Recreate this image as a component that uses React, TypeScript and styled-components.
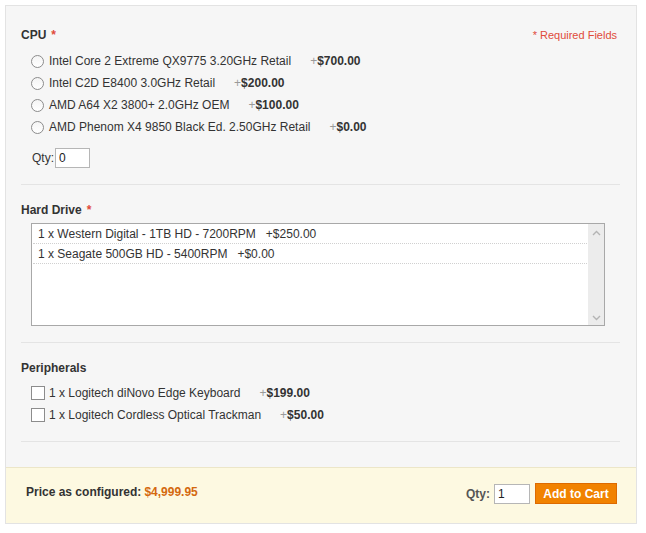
import React from 'react'
import styled, { createGlobalStyle } from 'styled-components'

const GlobalStyle = createGlobalStyle`
  body {
    margin: 0;
    background: #fff;
    font-family: 'Liberation Sans', Arial, sans-serif;
    font-size: 12px;
    color: #333;
  }
`

const Page = styled.div`
  padding: 5px;
`
const Panel = styled.div`
  width: 630px;
  border: 1px solid #e3e3e3;
  background: #f6f6f6;
`
const Options = styled.div`
  padding: 0 16px 25px 15px;
`
const Section = styled.div<{ first?: boolean; last?: boolean }>`
  padding: ${({ first }) => (first ? '20px' : '16px')} 0 ${({ last }) => (last ? '15px' : '16px')};
  border-bottom: 1px solid #e4e4e4;
`
const HeaderRow = styled.div`
  display: flex;
  justify-content: space-between;
  align-items: center;
  height: 18px;
`
const Title = styled.div`
  font-weight: bold;
  line-height: 18px;
  color: #333;
`
const Star = styled.span`
  color: #e04a3a;
  margin-left: 5px;
`
const Required = styled.div`
  font-size: 11px;
  color: #e04a3a;
  margin-right: 3px;
`
const OptionList = styled.div<{ gap: number }>`
  margin-top: ${({ gap }) => gap}px;
`
const OptionRow = styled.label`
  display: flex;
  align-items: center;
  height: 22px;
  padding-left: 10px;
  white-space: nowrap;
`
const Radio = styled.span`
  width: 11px;
  height: 11px;
  border-radius: 50%;
  border: 1px solid #8c8c8c;
  background: linear-gradient(#f4f4f4, #fff);
  margin-right: 5px;
  flex-shrink: 0;
`
const Checkbox = styled.span`
  width: 12px;
  height: 12px;
  border: 1px solid #8c8c8c;
  background: #fff;
  margin-right: 4px;
  flex-shrink: 0;
`
const Price = styled.span`
  margin-left: 19px;
  font-weight: bold;
  color: #333;
`
const Plus = styled.span`
  font-weight: normal;
  color: #9a9a9a;
`
const QtyRow = styled.div`
  display: flex;
  align-items: center;
  margin-top: 10px;
  padding-left: 11px;
`
const QtyLabel = styled.span<{ bold?: boolean }>`
  margin-right: ${({ bold }) => (bold ? '4px' : '1px')};
  font-weight: ${({ bold }) => (bold ? 'bold' : 'normal')};
  color: ${({ bold }) => (bold ? '#555' : '#333')};
`
const QtyInput = styled.input<{ w: number }>`
  box-sizing: border-box;
  width: ${({ w }) => w}px;
  height: 20px;
  border: 1px solid #b6b6b6;
  background: #fff;
  padding: 0 3px;
  font-family: inherit;
  font-size: 12px;
  color: #222;
  outline: none;
`
const ListBox = styled.div`
  display: flex;
  height: 101px;
  margin: 4px 15px 0 10px;
  border: 1px solid #a8a8a8;
  background: #fff;
`
const ListItems = styled.div`
  flex: 1;
  padding: 0 1px;
`
const ListItem = styled.div`
  height: 18px;
  padding-top: 1px;
  line-height: 19px;
  padding-left: 5px;
  border-bottom: 1px dotted #d0d0d0;
  white-space: pre;
  color: #333;
`
const ScrollBar = styled.div`
  width: 16px;
  background: #ececec;
  display: flex;
  flex-direction: column;
  justify-content: space-between;
  align-items: center;
  padding: 6px 0 4px;
`
const Footer = styled.div`
  display: flex;
  align-items: flex-start;
  justify-content: space-between;
  height: 56px;
  box-sizing: border-box;
  padding: 15px 19px 0 20px;
  border-top: 1px solid #ece6c8;
  background: #fdf9e1;
`
const PriceLabel = styled.div`
  font-weight: bold;
  line-height: 18px;
  color: #333;
`
const PriceValue = styled.span`
  color: #d4690f;
  margin-left: 3px;
`
const CartBox = styled.div`
  display: flex;
  align-items: center;
`
const CartButton = styled.button`
  height: 21px;
  width: 82px;
  margin-left: 5px;
  border: 1px solid #dd6a00;
  background: #f18200;
  color: #fff;
  font-family: inherit;
  font-size: 12px;
  font-weight: bold;
  padding: 0;
`

const Chevron = ({ up }: { up?: boolean }) => (
  <svg width="9" height="6" viewBox="0 0 9 6">
    <path d={up ? 'M1 5 L4.5 1.5 L8 5' : 'M1 1 L4.5 4.5 L8 1'} fill="none" stroke="#b4b4b4" strokeWidth="1.4" />
  </svg>
)

const cpus = [
  { label: 'Intel Core 2 Extreme QX9775 3.20GHz Retail', price: '$700.00' },
  { label: 'Intel C2D E8400 3.0GHz Retail', price: '$200.00' },
  { label: 'AMD A64 X2 3800+ 2.0GHz OEM', price: '$100.00' },
  { label: 'AMD Phenom X4 9850 Black Ed. 2.50GHz Retail', price: '$0.00' },
]

const drives = ['1 x Western Digital - 1TB HD - 7200RPM   +$250.00', '1 x Seagate 500GB HD - 5400RPM   +$0.00']

const peripherals = [
  { label: '1 x Logitech diNovo Edge Keyboard', price: '$199.00' },
  { label: '1 x Logitech Cordless Optical Trackman', price: '$50.00' },
]

export default function App() {
  return (
    <>
      <GlobalStyle />
      <Page>
        <Panel>
          <Options>
            <Section first>
              <HeaderRow>
                <Title>
                  CPU<Star>*</Star>
                </Title>
                <Required>* Required Fields</Required>
              </HeaderRow>
              <OptionList gap={6}>
                {cpus.map(cpu => (
                  <OptionRow key={cpu.label}>
                    <Radio />
                    {cpu.label}
                    <Price>
                      <Plus>+</Plus>
                      {cpu.price}
                    </Price>
                  </OptionRow>
                ))}
              </OptionList>
              <QtyRow>
                <QtyLabel>Qty:</QtyLabel>
                <QtyInput w={35} defaultValue="0" />
              </QtyRow>
            </Section>

            <Section>
              <Title>
                Hard Drive<Star>*</Star>
              </Title>
              <ListBox>
                <ListItems>
                  {drives.map(d => (
                    <ListItem key={d}>{d}</ListItem>
                  ))}
                </ListItems>
                <ScrollBar>
                  <Chevron up />
                  <Chevron />
                </ScrollBar>
              </ListBox>
            </Section>

            <Section last>
              <Title>Peripherals</Title>
              <OptionList gap={5}>
                {peripherals.map(p => (
                  <OptionRow key={p.label}>
                    <Checkbox />
                    {p.label}
                    <Price>
                      <Plus>+</Plus>
                      {p.price}
                    </Price>
                  </OptionRow>
                ))}
              </OptionList>
            </Section>
          </Options>

          <Footer>
            <PriceLabel>
              Price as configured:<PriceValue>$4,999.95</PriceValue>
            </PriceLabel>
            <CartBox>
              <QtyLabel bold>Qty:</QtyLabel>
              <QtyInput w={36} defaultValue="1" />
              <CartButton>Add to Cart</CartButton>
            </CartBox>
          </Footer>
        </Panel>
      </Page>
    </>
  )
}
